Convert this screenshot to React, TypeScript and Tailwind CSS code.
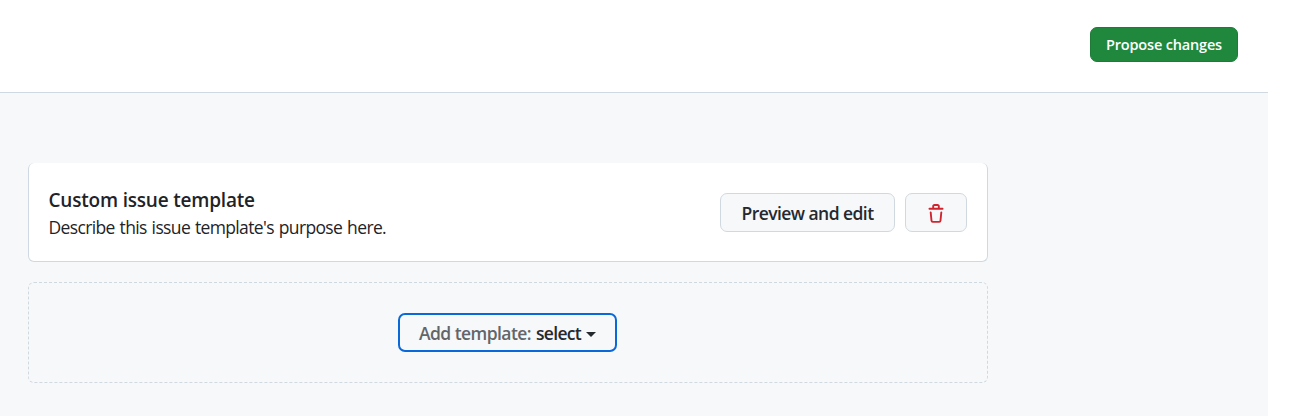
function TrashIcon() {
  return (
    <svg viewBox="0 0 16 16" className="mt-[3px] size-5" fill="currentColor" aria-hidden="true">
      <path d="M11 1.75V3h2.25a.75.75 0 0 1 0 1.5H2.75a.75.75 0 0 1 0-1.5H5V1.75C5 .784 5.784 0 6.75 0h2.5C10.216 0 11 .784 11 1.75ZM4.496 6.675l.66 6.6a.25.25 0 0 0 .249.225h5.19a.25.25 0 0 0 .249-.225l.66-6.6a.75.75 0 0 1 1.492.149l-.66 6.6A1.748 1.748 0 0 1 10.595 15h-5.19a1.75 1.75 0 0 1-1.741-1.575l-.66-6.6a.75.75 0 1 1 1.492-.15ZM6.5 1.75V3h3V1.75a.25.25 0 0 0-.25-.25h-2.5a.25.25 0 0 0-.25.25Z" />
    </svg>
  );
}

function TemplateCard() {
  return (
    <section className="flex h-[99px] items-center justify-between rounded-md border border-t-0 border-[#d0d9e1] bg-white pl-[19.5px] pr-5">
      <div className="whitespace-nowrap pt-0.5 text-[#1f2328]">
        <h2 className="text-[19px] font-semibold leading-[28px] tracking-[-0.2px]">Custom issue template</h2>
        <p className="text-[17.5px] leading-[27px] tracking-[-0.64px] [word-spacing:0.95px]">Describe this issue template's purpose here.</p>
      </div>
      <div className="flex gap-2.5">
        <button className="flex h-[39px] w-[175px] items-center justify-center whitespace-nowrap rounded-[7px] border border-[#d1d9e0] bg-[#f6f8fa] pt-0.5 text-[17.5px] font-semibold tracking-[-0.56px] text-[#25292e]">
          Preview and edit
        </button>
        <button aria-label="Delete template" className="flex h-[39px] w-[62px] items-center justify-center rounded-[7px] border border-[#d1d9e0] bg-[#f6f8fa] text-[#d1242f]">
          <TrashIcon />
        </button>
      </div>
    </section>
  );
}

function AddTemplate() {
  return (
    <section className="mt-5 flex h-[101px] items-center justify-center rounded-md border border-dashed border-[#d1d9e0]">
      <button className="mr-px flex h-[39px] w-[219px] items-center justify-center whitespace-nowrap rounded-[7px] border-2 border-[#0969da] bg-[#f6f8fa] pt-px text-[17.5px] font-semibold tracking-[-0.56px] text-[#25292e]">
        <span className="text-[#636569]">Add template:</span>
        <span className="ml-[5px] tracking-[-0.7px]">select</span>
        <span className="ml-[5px] mt-0.5 border-x-5 border-t-5 border-x-transparent border-t-[#25292e]" />
      </button>
    </section>
  );
}

export default function App() {
  return (
    <div className="flex h-[416px] w-[1305px] flex-col overflow-hidden bg-white font-['Open_Sans',sans-serif]">
      <header className="flex h-[93px] w-[1268px] items-start justify-end border-b border-[#d1d9e0] pr-[30px] pt-[27px]">
        <button className="flex h-[35px] w-[148px] items-center justify-center whitespace-nowrap rounded-[7px] border border-[#1f7b38] bg-[#1f883d] text-[14.5px] font-semibold tracking-[-0.17px] text-white">
          Propose changes
        </button>
      </header>
      <main className="w-[1268px] flex-1 bg-[#f6f8fa] pl-7 pt-[70px]">
        <div className="w-[960px]">
          <TemplateCard />
          <AddTemplate />
        </div>
      </main>
    </div>
  );
}
